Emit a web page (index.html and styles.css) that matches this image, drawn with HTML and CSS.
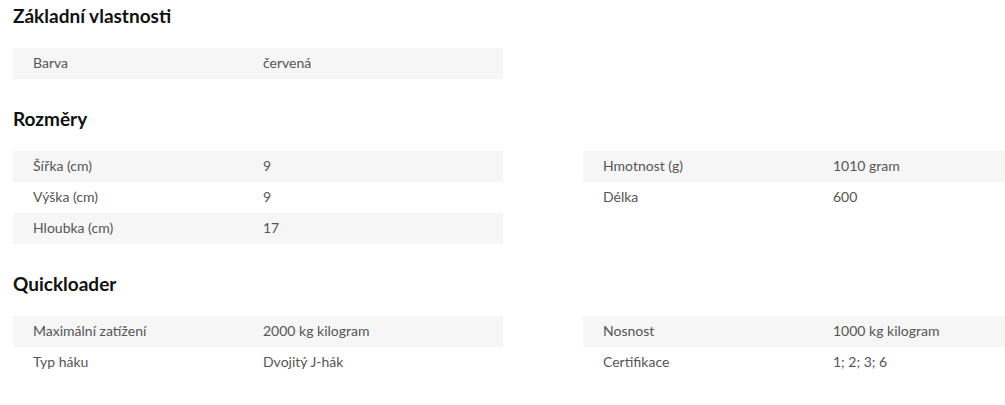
FILE: index.html
```html
<!DOCTYPE html>
<html lang="cs">
<head>
<meta charset="utf-8">
<link rel="stylesheet" href="styles.css">
</head>
<body>
<div class="page">
  <section class="section">
    <h2 class="title">Základní vlastnosti</h2>
    <div class="cols">
      <div class="table">
        <div class="row"><span class="label">Barva</span><span class="value">červená</span></div>
      </div>
    </div>
  </section>
  <section class="section">
    <h2 class="title">Rozměry</h2>
    <div class="cols">
      <div class="table">
        <div class="row"><span class="label">Šířka (cm)</span><span class="value">9</span></div>
        <div class="row"><span class="label">Výška (cm)</span><span class="value">9</span></div>
        <div class="row"><span class="label">Hloubka (cm)</span><span class="value">17</span></div>
      </div>
      <div class="table">
        <div class="row"><span class="label">Hmotnost (g)</span><span class="value">1010 gram</span></div>
        <div class="row"><span class="label">Délka</span><span class="value">600</span></div>
      </div>
    </div>
  </section>
  <section class="section">
    <h2 class="title">Quickloader</h2>
    <div class="cols">
      <div class="table">
        <div class="row"><span class="label">Maximální zatížení</span><span class="value">2000 kg kilogram</span></div>
        <div class="row"><span class="label">Typ háku</span><span class="value">Dvojitý J-hák</span></div>
      </div>
      <div class="table">
        <div class="row"><span class="label">Nosnost</span><span class="value">1000 kg kilogram</span></div>
        <div class="row"><span class="label">Certifikace</span><span class="value">1; 2; 3; 6</span></div>
      </div>
    </div>
  </section>
</div>
</body>
</html>
```

FILE: styles.css
```css
html, body {
  margin: 0;
  padding: 0;
  background: #ffffff;
  overflow: hidden;
}
body {
  font-family: Lato, "Open Sans", sans-serif;
  color: #555555;
}
.page {
  padding: 4px 0 0 13px;
}
.section {
  margin-bottom: 28px;
}
.title {
  margin: 0 0 20px 0;
  font-size: 19px;
  line-height: 24px;
  font-weight: 700;
  color: #111111;
}
.cols {
  display: grid;
  grid-template-columns: 490px 1fr;
  column-gap: 80px;
  align-items: start;
}
.row {
  display: flex;
  box-sizing: border-box;
  height: 31px;
  padding-bottom: 3px;
  align-items: center;
  font-size: 14px;
}
.row:nth-child(odd) {
  background: #f6f6f6;
}
.label {
  width: 230px;
  padding-left: 20px;
}
.value {
  flex: 1;
}
```
